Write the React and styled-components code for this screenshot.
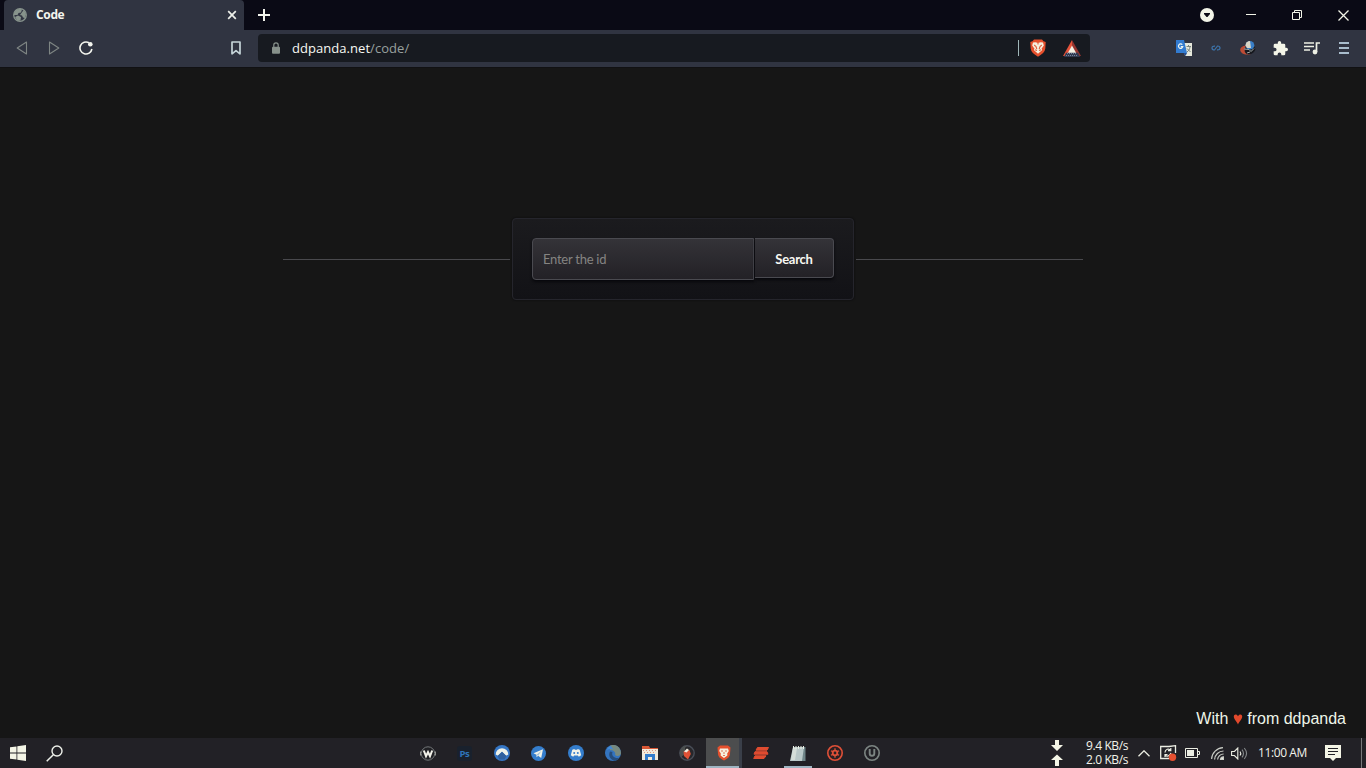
import React, { useState } from "react";
import styled, { createGlobalStyle } from "styled-components";

const trayApps = [
  { name: "wallpaper", Icon: WIcon },
  { name: "photoshop", Icon: PsIcon },
  { name: "nord", Icon: NordIcon },
  { name: "telegram", Icon: TelegramIcon },
  { name: "discord", Icon: DiscordIcon },
  { name: "edge", Icon: EdgeIcon },
  { name: "files", Icon: FilesIcon },
  { name: "fruit", Icon: FruitIcon },
  { name: "brave", Icon: BraveTaskIcon, active: true },
  { name: "stack", Icon: StackIcon },
  { name: "notes", Icon: NotesIcon, open: true },
  { name: "authy", Icon: GearIcon },
  { name: "unlocker", Icon: UIcon },
];

const App = () => {
  const [id, setId] = useState("");

  return (
    <Desktop>
      <GlobalStyle />

      {/* Tabs and window buttons */}
      <TabStrip>
        <Tab>
          <GlobeIcon />
          <TabTitle>Code</TabTitle>
          <Svg $w={10} $h={10} viewBox="0 0 10 10">
            <path d="M1.2 1.2l7.6 7.6M8.8 1.2L1.2 8.8" stroke="#eef0ea" strokeWidth="1.7" />
          </Svg>
        </Tab>
        <NewTab>
          <Svg $w={12} $h={12} viewBox="0 0 12 12">
            <path d="M6 0v12M0 6h12" stroke="#f4f5ee" strokeWidth="2" />
          </Svg>
        </NewTab>
        <WindowButtons>
          <Slot $w={42}>
            <Svg $w={14} $h={14} viewBox="0 0 14 14">
              <circle cx="7" cy="7" r="7" fill="#f3f5e8" />
              <path d="M4 5h6v1L7.500 9h-1L4 6z" fill="#0b0b16" />
            </Svg>
          </Slot>
          <Slot $w={46}>
            <Svg $w={10} $h={10} viewBox="0 0 10 10">
              <path d="M0 4.500h10" stroke="#f3f5e8" />
            </Svg>
          </Slot>
          <Slot $w={46}>
            <Svg $w={10} $h={10} viewBox="0 0 10 10" fill="none" stroke="#f3f5e8">
              <path d="M.5 2.500h7v7h-7zM2.500 2.500v-2h7v7h-2" />
            </Svg>
          </Slot>
          <Slot $w={46}>
            <Svg $w={11} $h={11} viewBox="0 0 11 11">
              <path d="M.5.5l10 10M10.500.5l-10 10" stroke="#f3f5e8" strokeWidth="1.300" />
            </Svg>
          </Slot>
        </WindowButtons>
      </TabStrip>

      {/* Address bar */}
      <Toolbar>
        <Nav>
          <Slot $w={32}>
            <Svg $w={12} $h={14} viewBox="0 0 12 14">
              <path d="M10.500 1v12L1.200 7z" fill="none" stroke="#7e8583" strokeWidth="1.100" strokeLinejoin="round" />
            </Svg>
          </Slot>
          <Slot $w={32}>
            <Svg $w={12} $h={14} viewBox="0 0 12 14">
              <path d="M1.500 1v12L10.800 7z" fill="none" stroke="#7e8583" strokeWidth="1.100" strokeLinejoin="round" />
            </Svg>
          </Slot>
          <Slot $w={32}>
            <Svg $w={14} $h={14} viewBox="0 0 14 14">
              <path d="M10 1.800A6 6 0 1 0 12.900 8" fill="none" stroke="#f3f5ee" strokeWidth="1.600" />
              <circle cx="11.300" cy="3.200" r="2.300" fill="#f3f5ee" />
            </Svg>
          </Slot>
        </Nav>
        <Slot $w={44}>
          <Svg $w={10} $h={14} viewBox="0 0 10 14">
            <path d="M1 1h8v11.800L5 9.700l-4 3.100z" fill="none" stroke="#c5d4d8" strokeWidth="1.700" strokeLinejoin="round" />
          </Svg>
        </Slot>
        <AddressBar>
          <Svg $w={8} $h={12} viewBox="0 0 8 12">
            <path d="M1.800 5V3a2.200 2.200 0 0 1 4.400 0v2" fill="none" stroke="#87918b" strokeWidth="1.200" />
            <rect y="4.700" width="8" height="7" rx="1" fill="#87918b" />
          </Svg>
          <Url>
            ddpanda.net<span>/code/</span>
          </Url>
          <Divider />
          <Slot $w={38}>
            <BraveIcon />
          </Slot>
          <Slot $w={30}>
            <Svg $w={18} $h={17} viewBox="0 0 18 17">
              <path d="M9 0L0 16h4.500L9 7z" fill="#e5533a" />
              <path d="M9 0l9 16h-4.500L9 7z" fill="#96352f" />
              <path d="M9 5.500l4.200 7.500H4.800z" fill="#f4f2e5" />
              <path d="M3 12.800h12L17 17H1z" fill="#323b50" />
              <path d="M4 13.500h10M3 15.500h12" stroke="#7384a0" strokeDasharray="1 1" />
            </Svg>
          </Slot>
        </AddressBar>
        <Extensions>
          <Slot $w={32}>
            <Svg $w={16} $h={16} viewBox="0 0 16 16">
              <path d="M7 3h9v13H9z" fill="#e6e8dc" />
              <path d="M0 0h8l3 13H0z" fill="#327bd0" />
              <path d="M7.500 13h3.500L9.500 16z" fill="#244d91" />
              <path d="M6.300 4.700a2.200 2.200 0 1 0 .5 2H4.800" fill="none" stroke="#edf4ef" strokeWidth="1.200" />
              <path d="M10.500 6.500h4.500M12.500 5v1.500M14 7c-.4 2.500-1.500 4-3 5M11 8.500l3.500 3.500" stroke="#78847f" fill="none" />
            </Svg>
          </Slot>
          <Slot $w={32}>
            <Svg $w={10} $h={6} viewBox="0 0 10 6">
              <path d="M4 1.200Q1 1 1 3t2.500 2L6.500 1Q9 1 9 3T6 4.800" fill="none" stroke="#3c74ab" strokeWidth="1.200" />
            </Svg>
          </Slot>
          <Slot $w={32}>
            <Svg $w={16} $h={15} viewBox="0 0 16 15">
              <path d="M6 4.500C1 5-1 8 1 11c2 3 7 3 10 2l-3-3-4-1z" fill="#bf4c35" />
              <ellipse cx="10" cy="9" rx="5.500" ry="4" fill="#17191f" transform="rotate(-25 10 9)" />
              <circle cx="10" cy="4.300" r="4.300" fill="#397fc8" />
              <path d="M10 0a4.500 4.500 0 0 0-4.500 4.500L7 7h4z" fill="#d9d6c6" />
              <path d="M4 8l5 .5 2 2 3-3M7 12l3-1" stroke="#a1aaaa" fill="none" />
            </Svg>
          </Slot>
          <Slot $w={32}>
            <Svg $w={15} $h={15} viewBox="1 1 22 22">
              <path fill="#f4f5e8" d="M20.500 11H19V7a2 2 0 0 0-2-2h-4V3.500a2.500 2.500 0 0 0-5 0V5H4a2 2 0 0 0-2 2v3.800h1.500a2.700 2.700 0 0 1 0 5.400H2V20a2 2 0 0 0 2 2h3.800v-1.500a2.700 2.700 0 0 1 5.400 0V22H17a2 2 0 0 0 2-2v-4h1.500a2.500 2.500 0 0 0 0-5z" />
            </Svg>
          </Slot>
          <Slot $w={32}>
            <Svg $w={16} $h={14} viewBox="0 0 16 14">
              <path d="M0 2h10M0 5.500h10M0 9h6M12.500 11V2H16" stroke="#edf0e4" strokeWidth="1.700" fill="none" />
              <circle cx="11" cy="11" r="2.400" fill="#edf0e4" />
            </Svg>
          </Slot>
          <Slot $w={32}>
            <Svg $w={10} $h={12} viewBox="0 0 10 12">
              <path d="M0 1h10M0 6h10M0 11h10" stroke="#a9bdcd" strokeWidth="2" />
            </Svg>
          </Slot>
        </Extensions>
      </Toolbar>

      {/* Web page */}
      <Page>
        <SearchRow>
          <Rule />
          <SearchBox onSubmit={(e) => e.preventDefault()}>
            <IdInput
              placeholder="Enter the id"
              value={id}
              onChange={(e) => setId(e.target.value)}
            />
            <SearchButton>Search</SearchButton>
          </SearchBox>
          <Rule />
        </SearchRow>
        <Credit>
          With <Heart viewBox="0 0 10 12"><path d="M5 11.500C4 8.800.8 6.500.8 3.600.8 1 3.900.9 5 3.300 6.100.9 9.200 1 9.200 3.600 9.200 6.500 6 8.800 5 11.500z" fill="#e2492c" /></Heart> from ddpanda
        </Credit>
      </Page>

      {/* Taskbar */}
      <Taskbar>
        <Slot $w={36}>
          <Svg $w={16} $h={16} viewBox="0 0 16 16" fill="#f4f5e6">
            <path d="M0 2.300L6.500 1.400v6.100H0zM7.300 1.300L16 0v7.500H7.300zM0 8.400h6.500v6.200L0 13.700zM7.300 8.400H16V16l-8.700-1.300z" />
          </Svg>
        </Slot>
        <Slot $w={37}>
          <Svg $w={17} $h={17} viewBox="0 0 17 17">
            <circle cx="11" cy="6" r="5" fill="none" stroke="#eef1ea" strokeWidth="1.400" />
            <path d="M7.300 9.700L.7 16.300" stroke="#eef1ea" strokeWidth="1.500" />
          </Svg>
        </Slot>
        <Apps>
          {trayApps.map(({ name, Icon, active, open }) => (
            <AppButton key={name} $active={active} $open={open}>
              <Icon />
            </AppButton>
          ))}
        </Apps>
        <Tray>
          <Slot $w={16}>
            <Svg $w={12} $h={26} viewBox="0 0 12 26" fill="#f4f5e6">
              <path d="M4 0h4v5h4l-6 6-6-6h4zM4 26h4v-6h4l-6-5.500L0 20h4z" />
            </Svg>
          </Slot>
          <Speeds>
            <span>9.4 KB/s</span>
            <span>2.0 KB/s</span>
          </Speeds>
          <Slot $w={26}>
            <Svg $w={12} $h={7} viewBox="0 0 12 7">
              <path d="M.5 6.300L6 .8l5.500 5.500" fill="none" stroke="#eceee3" strokeWidth="1.300" />
            </Svg>
          </Slot>
          <Slot $w={23}>
            <Svg $w={17} $h={16} viewBox="0 0 17 16">
              <path d="M15.500 8V.7L9 1.500H.7v12H9" fill="none" stroke="#eceee3" strokeWidth="1.300" />
              <path d="M5 7.500C5 4 9 3 10.500 5.300M10.800 3v2.600H8M11 8c-1 3-4 4-6 2M5 12V9.500h2.500" fill="none" stroke="#eceee3" strokeWidth="1.200" />
              <circle cx="12.500" cy="12.300" r="3.700" fill="#e65030" />
            </Svg>
          </Slot>
          <Slot $w={25}>
            <Svg $w={15} $h={10} viewBox="0 0 15 10">
              <path d="M.5.5h12v9H.5zM12.500 3.500h2v3h-2" fill="none" stroke="#eceee3" />
              <path d="M2 2h7v6H2z" fill="#eceee3" />
            </Svg>
          </Slot>
          <Slot $w={24}>
            <Svg $w={13} $h={13} viewBox="0 0 13 13" fill="none" stroke="#c8cbc4" strokeWidth="1.200">
              <path d="M.6 12A12 12 0 0 1 12 .7M3.600 12.500A9 9 0 0 1 12.500 4M6.600 12.500a6 6 0 0 1 6-5.500" />
              <path d="M9.500 12.500a3 3 0 0 1 3-2.700v2.700z" fill="#eceee3" />
            </Svg>
          </Slot>
          <Slot $w={21}>
            <Svg $w={17} $h={13} viewBox="0 0 17 13" fill="none" stroke="#eceee3" strokeWidth="1.100">
              <path d="M.6 4.500h2.800L6.800 1v11L3.400 8.500H.6z" />
              <path d="M9 4.500q1.500 2 0 4" />
              <path d="M11 2.700q3 3.800 0 7.600M13.300 1q4.500 5.500 0 11" stroke="#85888a" />
            </Svg>
          </Slot>
          <Clock>11:00 AM</Clock>
          <Slot $w={52}>
            <Svg $w={16} $h={16} viewBox="0 0 16 16">
              <path d="M0 0h16v13h-5l-3 3-3-3H0z" fill="#f4f5e6" />
              <path d="M3 3.500h10M3 6.500h10M3 9.500h7" stroke="#222126" strokeWidth="1.200" />
            </Svg>
          </Slot>
          <ShowDesktop />
        </Tray>
      </Taskbar>
    </Desktop>
  );
};

export default App;

function GlobeIcon() {
  return (
    <Svg $w={14} $h={14} viewBox="0 0 14 14">
      <circle cx="7" cy="7" r="6.300" fill="#333744" stroke="#87938c" strokeWidth="1.300" />
      <path d="M1 5l2-3 4-1.500 2 1L8 4.500 5.500 5 4.500 7 1 7zM2 9l3-1.500L8 9l-.5 3.500-3 .5zM9.500 3.500L11 2l2 4-1 4-2-.5L9 7.500 7 7z" fill="#87938c" />
    </Svg>
  );
}

function BraveIcon() {
  return (
    <Svg $w={16} $h={18} viewBox="0 0 16 18">
      <path d="M4 .5h8l1.500 1.700L15.700 3l-.4 6.500c-.4 3.500-3 5.500-7.300 8.200C3.700 15 1.100 13 .7 9.500L.3 3l2.200-.8z" fill="#e5502d" />
      <path d="M3 3.500l2.500-.3L8 4l2.500-.8 2.500.3.800 3-2.300 3.300.7 1.300L8 14.700l-4.200-3.600.7-1.300L2.200 6.500z" fill="#f6f0df" />
      <path d="M4.200 6l1.800 1.500.8 2.500M11.800 6L10 7.500 9.200 10M5 10.800l2 .7M11 10.800l-2 .7M8 3.500v2" fill="none" stroke="#dd5f3e" strokeWidth="1.100" />
    </Svg>
  );
}

function BraveTaskIcon() {
  return (
    <Svg $w={14} $h={16} viewBox="0 0 14 16">
      <path d="M3 .5h8l2.500 2-.5 6.500c-.4 3-2 4.500-6 6.500C3 13.500 1.400 12 1 9L.5 2.500z" fill="#e5502d" />
      <path d="M3 3.500h8l.8 2.500-1.600 2.500.2 2L7 13l-3.400-2.500.2-2L2.200 6z" fill="#f6f0df" />
      <path d="M4 6h2M8 6h2M7 7v2M6 10.500h2" stroke="#dd7658" fill="none" />
    </Svg>
  );
}

function WIcon() {
  return (
    <Svg $w={16} $h={15} viewBox="0 0 16 15">
      <circle cx="8" cy="7.500" r="6.700" fill="#202024" stroke="#74787a" />
      <path d="M3.800 4.500L6 10.200 8 6l2 4.200 2.200-5.700" fill="none" stroke="#f2f2ea" strokeWidth="2" />
      <path d="M.5 5.500v4M15.500 5.500v4" stroke="#91938f" />
    </Svg>
  );
}

function PsIcon() {
  return <Photoshop>Ps</Photoshop>;
}

function NordIcon() {
  return (
    <Svg $w={16} $h={16} viewBox="0 0 16 16">
      <circle cx="8" cy="8" r="8" fill="#3576c5" />
      <path d="M1.700 9.500a6.300 6.300 0 0 1 12.600 0l-2.300 1.200L8 6.800l-4 3.900z" fill="#eef2e9" />
      <path d="M3.500 11L8 6.800l4.500 4.200-2 3.500h-5z" fill="#2f609e" />
    </Svg>
  );
}

function TelegramIcon() {
  return (
    <Svg $w={15} $h={15} viewBox="0 0 15 15">
      <circle cx="7.500" cy="7.500" r="7.500" fill="#347dcc" />
      <path d="M2.500 7.200l9.500-4-1.800 8.700-3-2.100-1.700 1.500V8.700z" fill="#f1f3e9" />
      <path d="M5.500 8.700L10.300 5 7.200 9.800" fill="#9ebfda" />
    </Svg>
  );
}

function DiscordIcon() {
  return (
    <Svg $w={16} $h={16} viewBox="0 0 16 16">
      <circle cx="8" cy="8" r="8" fill="#347dcc" />
      <path d="M4.300 4.700l2-.7.600.8h2.200l.6-.8 2 .7 1.500 5.500-2.400 1.500-.9-1.200H6.100l-.9 1.200-2.400-1.500z" fill="#f1f3e9" />
      <circle cx="6.200" cy="8" r="1" fill="#347dcc" />
      <circle cx="9.800" cy="8" r="1" fill="#347dcc" />
    </Svg>
  );
}

function EdgeIcon() {
  return (
    <Svg $w={16} $h={16} viewBox="0 0 16 16">
      <circle cx="8" cy="8" r="8" fill="#3474bf" />
      <path d="M5 .7c5-2.500 11 1.500 11 7.300 0 3-4 4-6 2 1-2-.5-5-5-5z" fill="#77897f" />
      <path d="M5 6.500c-2 4 0 8 4.500 9.300 2-.3 4-1.300 5-3C10 14 6 11 7.500 7z" fill="#264d7d" />
      <path d="M6 1a5 5 0 0 0-4 4c2-1.500 5-1.500 6.500 0z" fill="#4389d4" />
    </Svg>
  );
}

function FilesIcon() {
  return (
    <Svg $w={16} $h={14} viewBox="0 0 16 14">
      <path d="M0 0h7l1 2h8v12H0z" fill="#d95836" />
      <path d="M0 3h16v11H0z" fill="#f1eadb" />
      <path d="M1 4.500h14M2 6.500h12" stroke="#df9580" strokeDasharray="1 2" />
      <path d="M3 14V8h10v6h-3v-3H6v3z" fill="#347dcc" />
    </Svg>
  );
}

function FruitIcon() {
  return (
    <Svg $w={16} $h={16} viewBox="0 0 16 16">
      <circle cx="8" cy="8" r="7.200" fill="#28272b" stroke="#484d57" strokeWidth="1.400" />
      <path d="M8 .7A7.300 7.300 0 0 0 2 12l4-3V3z" fill="#4c504f" />
      <path d="M4.500 6.500l6-1.500 1.300 4L9 14.500 5 11z" fill="#df5135" />
      <path d="M5 6.500L8 3.500l2 1.500-2.500 2.500z" fill="#f1eddf" />
    </Svg>
  );
}

function StackIcon() {
  return (
    <Svg $w={16} $h={14} viewBox="0 0 16 14" fill="#df4c30" stroke="#df4c30" strokeLinejoin="round">
      <path d="M4.500 1.500h11l-1.500 2.700H3zM2 5.700h12l1 2.500H1zM2 9.800h11l-2 2.700H.7z" />
    </Svg>
  );
}

function NotesIcon() {
  return (
    <Svg $w={16} $h={17} viewBox="0 0 16 17">
      <path d="M3 2h12l-1.500 14H0z" fill="#b9c8c8" />
      <path d="M14 2h1.500v14H12z" fill="#6f8588" />
      <path d="M3 3h4L5 15H1z" fill="#d5ded9" />
      <path d="M3.500 1v3M6 1v3M8.500 1v3M11 1v3M13.500 1v3" stroke="#e9efe4" />
    </Svg>
  );
}

function GearIcon() {
  return (
    <Svg $w={16} $h={16} viewBox="0 0 16 16">
      <circle cx="8" cy="8" r="7.200" fill="#2b2022" stroke="#df5038" strokeWidth="1.600" />
      <circle cx="8" cy="8" r="2.300" fill="none" stroke="#df5038" strokeWidth="1.800" />
      <path d="M8 3.300v2.500M8 10.200v2.500M4 5.700l2.100 1.200M9.900 9.100l2.100 1.200M4 10.300l2.100-1.200M9.900 6.900L12 5.700" stroke="#df5038" strokeWidth="1.300" />
    </Svg>
  );
}

function UIcon() {
  return (
    <Svg $w={16} $h={16} viewBox="0 0 16 16">
      <circle cx="8" cy="8" r="7.200" fill="none" stroke="#7c8582" strokeWidth="1.600" />
      <path d="M5.700 4v4.500a2.300 2.300 0 0 0 4.600 0V4" fill="none" stroke="#7c8582" strokeWidth="1.900" />
    </Svg>
  );
}

const GlobalStyle = createGlobalStyle`
  * {
    box-sizing: border-box;
  }

  body {
    margin: 0;
    background: #161616;
    overflow: hidden;
  }
`;

const Svg = styled.svg`
  display: block;
  flex: none;
  width: ${(p) => p.$w}px;
  height: ${(p) => p.$h}px;
`;

const Slot = styled.div`
  display: flex;
  align-items: center;
  justify-content: center;
  flex: none;
  width: ${(p) => p.$w}px;
`;

const Desktop = styled.div`
  display: flex;
  flex-direction: column;
  width: 1366px;
  height: 768px;
  background: #161616;
  font-family: "Open Sans", "Noto Sans", sans-serif;
`;

const TabStrip = styled.div`
  display: flex;
  height: 30px;
  padding-left: 4px;
  background: #0a0a15;
`;

const Tab = styled.div`
  display: flex;
  align-items: center;
  width: 240px;
  padding: 0 7px 0 9px;
  border-radius: 4px 4px 0 0;
  background: #303441;
`;

const TabTitle = styled.span`
  flex: 1;
  margin: -1px 0 0 9px;
  color: #f4f5ee;
  font-size: 12px;
  font-weight: 700;
  letter-spacing: -0.35px;
`;

const NewTab = styled.div`
  display: flex;
  align-items: center;
  margin-left: 14px;
`;

const WindowButtons = styled.div`
  display: flex;
  margin-left: auto;
`;

const Toolbar = styled.div`
  display: flex;
  align-items: center;
  height: 37px;
  padding: 0 6px 1px;
  background: #303441;
`;

const Nav = styled.div`
  display: flex;
  width: 208px;
`;

const AddressBar = styled.div`
  display: flex;
  align-items: center;
  width: 832px;
  height: 28px;
  padding: 0 3px 0 14px;
  border-radius: 4px;
  background: #171a20;
`;

const Url = styled.span`
  flex: 1;
  margin-left: 12px;
  color: #f8f9f3;
  font-size: 13px;
  font-weight: 500;
  letter-spacing: 0.05px;

  span {
    color: #98a09e;
    font-weight: 400;
  }
`;

const Divider = styled.div`
  width: 1px;
  height: 16px;
  background: #9fb6b8;
`;

const Extensions = styled.div`
  display: flex;
  margin-left: auto;
`;

const Page = styled.main`
  display: flex;
  flex: 1;
  flex-direction: column;
  align-items: center;
  justify-content: space-between;
  padding: 151px 20px 9px;
  border-top: 1px solid #111113;
`;

const SearchRow = styled.div`
  display: flex;
  align-items: center;
  width: 800px;
  gap: 2px;
  margin-top: -1px;
`;

const Rule = styled.div`
  flex: 1;
  height: 1px;
  background: #49494d;
`;

const SearchBox = styled.form`
  display: flex;
  align-items: flex-start;
  width: 342px;
  height: 82px;
  padding: 19px;
  border: 1px solid #25252c;
  border-radius: 4px;
  background: linear-gradient(#1b1b1e, #121216);
  box-shadow: 0 0 2px #08080b;
`;

const IdInput = styled.input`
  width: 222px;
  height: 42px;
  padding: 0 10px;
  border: 1px solid #4a4a50;
  border-radius: 4px 0 0 4px;
  outline: none;
  background: linear-gradient(#343338, #232126);
  box-shadow: 0 2px 3px #08080c;
  color: #eee;
  font-family: Lato, sans-serif;
  font-size: 13px;
  letter-spacing: -0.25px;

  &::placeholder {
    color: #858482;
    opacity: 1;
  }
`;

const SearchButton = styled.button`
  flex: 1;
  height: 40px;
  padding: 2px 0 0;
  margin-left: 1px;
  border: 1px solid #4a4a50;
  border-left: 0;
  border-radius: 0 4px 4px 0;
  background: linear-gradient(#343338, #232126);
  box-shadow: 0 2px 3px #08080c;
  color: #f8f8f3;
  font-family: Lato, sans-serif;
  font-size: 13px;
  line-height: 16px;
  font-weight: 700;
  letter-spacing: -0.25px;
`;

const Credit = styled.div`
  align-self: flex-end;
  color: #eef5e9;
  font: 16px/20px "Liberation Sans", Arial, sans-serif;
`;

const Heart = styled.svg`
  width: 10px;
  height: 12px;
  vertical-align: -1px;
`;

const Taskbar = styled.div`
  display: flex;
  height: 30px;
  background: #222126;
`;

const Apps = styled.div`
  display: flex;
  margin-left: 336px;
`;

const AppButton = styled.div`
  display: flex;
  align-items: center;
  justify-content: center;
  width: ${(p) => (p.$active ? 33 : p.$open ? 28 : 37)}px;
  margin: ${(p) => (p.$active ? "0 3px 0 1px" : p.$open ? "0 4px 0 5px" : "0")};
  padding-top: ${(p) => (p.$active || p.$open ? 2 : 0)}px;
  padding-left: ${(p) => (p.$active ? 2 : 0)}px;
  border-bottom: ${(p) => (p.$active || p.$open ? "2px solid #9eb5c2" : "none")};
  background: ${(p) => (p.$active ? "#4c4d4e" : "transparent")};
  box-shadow: ${(p) => (p.$active ? "3px 0 #3a3f49" : "none")};
`;

const Photoshop = styled.span`
  padding: 1px 2px;
  border-radius: 3px;
  background: #19212d;
  color: #2f75b9;
  font-size: 9.5px;
  font-weight: 700;
  line-height: 13px;
  letter-spacing: -0.3px;
`;

const Tray = styled.div`
  display: flex;
  margin-left: auto;
  color: #f2f3ea;
  font-size: 12px;
`;

const Speeds = styled.div`
  display: flex;
  flex-direction: column;
  justify-content: center;
  width: 66px;
  padding-left: 21px;
  line-height: 14px;
  letter-spacing: -0.4px;
  white-space: nowrap;
`;

const Clock = styled.div`
  width: 57px;
  padding-left: 8px;
  line-height: 30px;
  letter-spacing: -0.4px;
  white-space: nowrap;
`;

const ShowDesktop = styled.div`
  width: 5px;
  margin-left: 2px;
  border-left: 1px solid #77787a;
`;
